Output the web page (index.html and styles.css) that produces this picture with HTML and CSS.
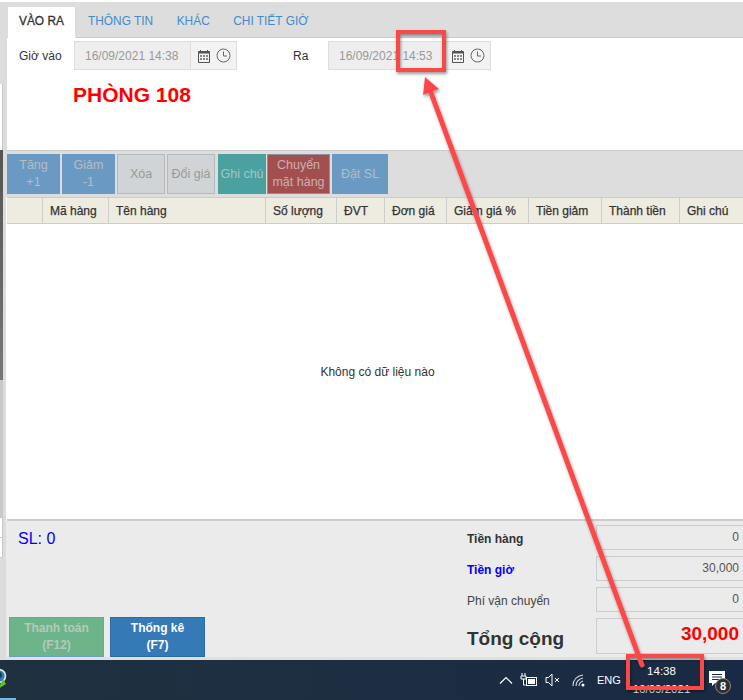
FILE: index.html
```html
<!DOCTYPE html>
<html lang="vi">
<head>
<meta charset="utf-8">
<title>Phòng 108</title>
<link rel="stylesheet" href="styles.css">
</head>
<body>
<div class="app">
  <aside class="side">
    <div class="side-top"></div>
    <div class="side-white"></div>
    <div class="side-dark"></div>
    <div class="side-mid"></div>
    <div class="side-row"></div>
    <div class="side-row last"></div>
    <div class="side-end"></div>
  </aside>
  <main class="main">
    <nav class="tabs">
      <span class="tab active">VÀO RA</span>
      <span class="tab">THÔNG TIN</span>
      <span class="tab">KHÁC</span>
      <span class="tab">CHI TIẾT GIỜ</span>
    </nav>
    <section class="head">
      <div class="times">
        <span class="lbl in">Giờ vào</span>
        <div class="date">
          <span class="date-val">16/09/2021 14:38</span>
          <span class="date-add">
            <svg width="14" height="14" viewBox="0 0 14 14"><use href="#cal"/></svg>
            <svg width="15" height="15" viewBox="0 0 15 15"><use href="#clk"/></svg>
          </span>
        </div>
        <span class="lbl out">Ra</span>
        <div class="date">
          <span class="date-val">16/09/2021 14:53</span>
          <span class="date-add">
            <svg width="14" height="14" viewBox="0 0 14 14"><use href="#cal"/></svg>
            <svg width="15" height="15" viewBox="0 0 15 15"><use href="#clk"/></svg>
          </span>
        </div>
      </div>
      <h1 class="room">PHÒNG 108</h1>
    </section>
    <section class="tools">
      <button class="btn blue w53">Tăng<br>+1</button>
      <button class="btn blue w53">Giảm<br>-1</button>
      <button class="btn grey w48">Xóa</button>
      <button class="btn grey w48">Đổi giá</button>
      <button class="btn teal">Ghi chú</button>
      <button class="btn red">Chuyển<br>mặt hàng</button>
      <button class="btn blue w56">Đặt SL</button>
    </section>
    <div class="thead">
      <span class="th c0"></span>
      <span class="th c1">Mã hàng</span>
      <span class="th c2">Tên hàng</span>
      <span class="th c3">Số lượng</span>
      <span class="th c4">ĐVT</span>
      <span class="th c5">Đơn giá</span>
      <span class="th c6">Giảm giá %</span>
      <span class="th c7">Tiền giảm</span>
      <span class="th c8">Thành tiền</span>
      <span class="th c9">Ghi chú</span>
    </div>
    <div class="tbody">Không có dữ liệu nào</div>
    <footer class="foot">
      <div class="foot-left">
        <div class="sl">SL: 0</div>
        <div class="foot-btns">
          <button class="pay green">Thanh toán<br>(F12)</button>
          <button class="pay navy">Thống kê<br>(F7)</button>
        </div>
      </div>
      <div class="foot-right">
        <div class="sum"><span class="sum-l b">Tiền hàng</span><span class="sum-v">0</span></div>
        <div class="sum"><span class="sum-l b link">Tiền giờ</span><span class="sum-v">30,000</span></div>
        <div class="sum"><span class="sum-l">Phí vận chuyển</span><span class="sum-v">0</span></div>
        <div class="sum total"><span class="sum-l">Tổng cộng</span><span class="sum-v">30,000</span></div>
      </div>
    </footer>
    <div class="foot-end"></div>
  </main>
</div>
<div class="taskbar">
  <div class="task-left">
    <svg class="globe" width="8" height="22" viewBox="0 0 8 22">
      <circle cx="-1" cy="8" r="6.5" fill="#2f7fb5" stroke="#dfeaf2" stroke-width="1.6"/>
      <circle cx="-1" cy="7" r="3" fill="#173a55"/>
      <path d="M-2 21l8-5-3-5z" fill="#5fc12f"/>
    </svg>
    <span class="task-active"></span>
  </div>
  <div class="tray">
    <svg class="chev" width="14" height="8" viewBox="0 0 14 8"><path d="M1 7.5L7 1.5l6 6" fill="none" stroke="#fff" stroke-width="1.2"/></svg>
    <svg class="batt" width="18" height="14" viewBox="0 0 18 14"><path d="M2 0v3M5 0v3M1 3h5v3H1zM3.500 6v6h2" fill="none" stroke="#fff"/><rect x="6.500" y="4.500" width="10" height="8" fill="none" stroke="#fff"/><rect x="8" y="6" width="7" height="5" fill="#fff"/></svg>
    <svg class="spk" width="15" height="14" viewBox="0 0 15 14"><path d="M1 4.500h2.500L7 1v12L3.500 9.500H1z" fill="none" stroke="#fff"/><path d="M10 5l4 4M14 5l-4 4" stroke="#fff" fill="none"/></svg>
    <svg class="wifi" width="14" height="14" viewBox="0 0 14 14"><path d="M1 13C1 7 5 3 11 2M4 13c0-4 3-7 7-8M7 13c0-2 1.500-4 4-5" fill="none" stroke="#cfd6dd" stroke-width="1.100"/><circle cx="11" cy="12" r="1.500" fill="#fff"/></svg>
    <span class="eng">ENG</span>
    <div class="clock"><span>14:38</span><span>16/09/2021</span></div>
    <div class="notif">
      <svg width="17" height="16" viewBox="0 0 17 16"><path d="M0 0h16v12H6l-3 3v-3H0z" fill="#fff"/><path d="M3 3.500h10M3 6h10M3 8.500h7" stroke="#1b2a44"/></svg>
      <span class="badge">8</span>
    </div>
  </div>
</div>
<svg class="notes" width="743" height="700" viewBox="0 0 743 700">
  <defs>
    <filter id="sh" x="-10%" y="-10%" width="120%" height="120%"><feDropShadow dx="1" dy="2" stdDeviation="1.500" flood-color="#000" flood-opacity=".4"/></filter>
    <g id="cal"><path d="M1.500 2.500h11v11h-11z" fill="none" stroke="#555"/><path d="M1.500 3.500h11" stroke="#555" stroke-width="2"/><path d="M3.500 1v2M10.500 1v2" stroke="#555"/><path d="M3 6h2v2H3zM6 6h2v2H6zM9 6h2v2H9zM3 9h2v2H3zM6 9h2v2H6zM9 9h2v2H9z" fill="#888"/></g>
    <g id="clk"><circle cx="7.500" cy="7.500" r="6.500" fill="none" stroke="#666"/><path d="M7.500 3.500v4.500h3.500" fill="none" stroke="#666"/></g>
  </defs>
  <g filter="url(#sh)" fill="none" stroke="#fb4a4a">
    <rect x="398" y="32" width="46" height="38" stroke-width="4"/>
    <rect x="628" y="656" width="74" height="32" stroke-width="4"/>
    <path d="M642 665L430 90" stroke-width="5" stroke-linecap="round"/>
    <path d="M425 77L439 89L423 95z" fill="#fb4a4a" stroke="none"/>
  </g>
</svg>
</body>
</html>
```
FILE: styles.css
```css
* { box-sizing: border-box; }
html, body { margin: 0; padding: 0; }
body {
  width: 743px;
  height: 700px;
  overflow: hidden;
  position: relative;
  background: #fff;
  font-family: "Liberation Sans", Arial, sans-serif;
  font-size: 12px;
  color: #333;
}
.app { display: flex; height: 660px; padding-top: 2px; }

.side { width: 6px; display: flex; flex-direction: column; background: #dcdcdc; flex: none; }
.side-top { height: 82px; }
.side-white { height: 66px; width: 3px; background: #fff; border-right: 1px solid #c8c8c8; }
.side-dark { height: 230px; width: 3px; background: linear-gradient(#555, #777); }
.side-mid { height: 138px; width: 3px; background: #c9c9c9; }
.side-row { height: 20px; width: 3px; background: #fff; border-right: 1px solid #c8c8c8; border-bottom: 1px solid #ccc; }
.side-row.last { height: 20px; }
.side-end { flex: 1; }

.main { flex: 1; display: flex; flex-direction: column; min-width: 0; }

.tabs { height: 36px; background: #ddd; border-bottom: 1px solid #ccc; display: flex; align-items: flex-end; padding-left: 1px; }
.tab { height: 32px; padding: 8px 11.500px 0 12px; color: #428bca; font-size: 11.900px; margin-bottom: -1px; }
.tab.active { width: 69px; background: #fff; color: #333; -webkit-text-stroke: .3px #333; border: 1px solid #ddd; border-bottom: 0; padding: 7px 0 0 11px; }

.head { height: 112px; background: #fff; border-left: 1px solid #ddd; padding-top: 3px; }
.times { display: flex; align-items: center; height: 29px; }
.lbl { color: #333; }
.lbl.in { width: 61px; padding-left: 12px; margin-right: 6px; }
.lbl.out { width: 91px; padding-left: 56px; }
.date { display: flex; width: 163px; height: 29px; border: 1px solid #ddd; background: #f3f3f3; }
.date-val { width: 116px; background: #eee; border-right: 1px solid #ddd; color: #999; padding: 7px 0 0 10px; }
.date-add { flex: 1; display: flex; align-items: center; gap: 5px; padding-left: 6px; }
.room { margin: 13px 0 0 66px; font-size: 21px; line-height: 24px; font-weight: bold; color: #f00; }

.tools { height: 47px; background: #ddd; border-top: 1px solid #ccc; display: flex; gap: 2px; padding: 3px 0 0 1px; }
.btn { height: 40px; border: 1px solid; border-radius: 0; padding: 0; font: 12.500px/17px "Liberation Sans", Arial, sans-serif; color: #b5bdc4; flex: none; }
.w53 { width: 53px; }
.w48 { width: 48px; }
.w56 { width: 56px; }
.blue { background: #6a9ac4; border-color: #6a9ac4; }
.grey { background: #d0d4d6; border-color: #b5b9bb; color: #999; }
.teal { width: 48px; margin-left: 1px; background: #4ba19f; border-color: #4ba19f; color: #a8c4c4; }
.red { width: 63px; margin-left: -1px; background: #a24f50; border-color: #8f8fa0; color: #ccb0b0; }

.thead { height: 27px; display: flex; border-top: 1px solid #ccc; border-bottom: 1px solid #ccc; background: #eeebe0; margin-left: 1px; }
.th { border-right: 1px solid #ccc; padding: 6px 0 0 7px; -webkit-text-stroke: .25px #333; white-space: nowrap; flex: none; }
.c0 { width: 36px; }
.c1 { width: 66px; }
.c2 { width: 157px; }
.c3 { width: 71px; }
.c4 { width: 48px; }
.c5 { width: 62px; }
.c6 { width: 82px; }
.c7 { width: 73px; }
.c8 { width: 78px; }
.c9 { width: 64px; border-right: 0; }

.tbody { height: 297px; background: #fff; margin-left: 1px; display: flex; align-items: center; justify-content: center; padding-left: 5px; color: #333; border-bottom: 2px solid #ccc; }

.foot { height: 136px; background: #ebebeb; display: flex; justify-content: space-between; }
.foot-left { display: flex; flex-direction: column; justify-content: space-between; padding: 9px 0 0 12px; }
.sl { font-size: 16px; line-height: 18px; color: #00f; }
.foot-btns { display: flex; gap: 6px; margin-left: -9px; }
.pay { width: 95px; height: 40px; border: 1px solid; padding: 0; font: bold 12px/17px "Liberation Sans", Arial, sans-serif; }
.green { background: #6eb48a; border-color: #6f9fbe; color: #b5c9bc; }
.navy { background: #337ab7; border-color: #2e6da4; color: #fff; }
.foot-right { width: 276px; padding-top: 4px; display: flex; flex-direction: column; gap: 6px; }
.sum { display: flex; align-items: center; height: 25px; }
.sum-l { width: 129px; padding-top: 3px; color: #444; }
.sum-l.b { font-weight: bold; color: #333; }
.sum-l.link { color: #00f; }
.sum-v { flex: 1; height: 100%; border: 1px solid #ccc; border-right: 0; text-align: right; padding: 4px 4px 0 0; color: #555; }
.total { height: 36px; }
.total .sum-l { font-size: 19px; font-weight: bold; color: #333; padding-top: 5px; }
.total .sum-v { font-size: 19px; font-weight: bold; color: #f00; line-height: 22px; padding-top: 4px; }
.foot-end { flex: 1; background: #e0e0e0; }

.taskbar { height: 40px; background: linear-gradient(90deg, #1f313f, #1a2a44); display: flex; justify-content: space-between; color: #fff; }
.task-left { width: 16px; position: relative; }
.globe { position: absolute; left: 0; top: 8px; }
.task-active { position: absolute; left: 0; bottom: 0; width: 16px; height: 2px; background: #76b9ed; }
.tray { display: flex; align-items: center; position: relative; height: 40px; }
.chev { margin-right: 7px; }
.batt { margin-right: 7px; }
.spk { margin-right: 12px; }
.wifi { margin-right: 11px; }
.eng { width: 36px; font-size: 11px; }
.clock { width: 57px; display: flex; flex-direction: column; align-items: center; font-size: 11.500px; line-height: 18px; margin-right: 19px; }
.notif { width: 34px; height: 40px; position: relative; padding-top: 11px; }
.badge { position: absolute; left: 6px; top: 18px; width: 16px; height: 16px; border-radius: 50%; background: #2f2f2f; border: 1px solid #888; text-align: center; font-size: 11px; line-height: 14px; font-weight: bold; color: #fff; }

.notes { position: absolute; left: 0; top: 0; pointer-events: none; }
```
